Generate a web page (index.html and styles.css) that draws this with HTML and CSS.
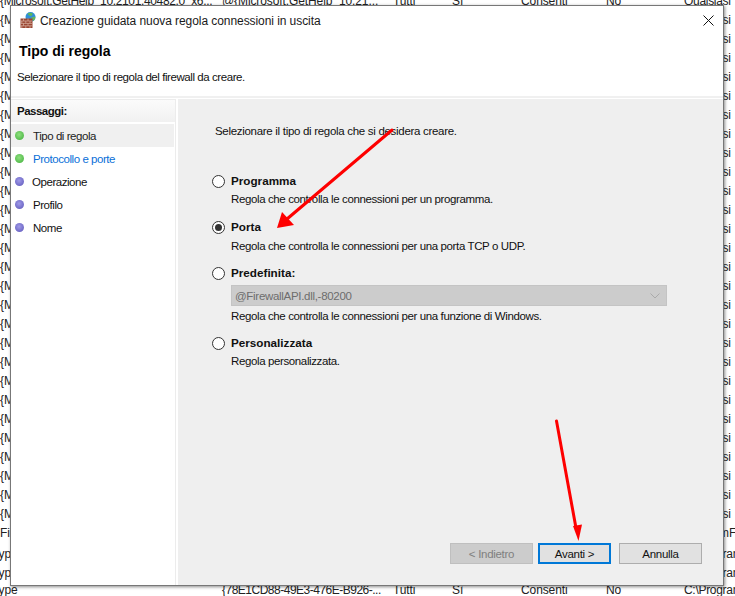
FILE: index.html
```html
<!DOCTYPE html>
<html lang="it">
<head>
<meta charset="utf-8">
<title>Creazione guidata nuova regola connessioni in uscita</title>
<link rel="stylesheet" href="styles.css">
</head>
<body>
<div class="backdrop">
  <div class="bg-row first"><span class="c1">{Microsoft.GetHelp_10.2101.40482.0_x6...</span><span class="c2">@{Microsoft.GetHelp_10.21...</span><span class="c3">Tutti</span><span class="c4">Sì</span><span class="c5">Consenti</span><span class="c6">No</span><span class="c7">Qualsiasi</span></div>
  <div class="bg-row"><span class="c1">{M</span><span class="c7">Qualsiasi</span></div>
  <div class="bg-row"><span class="c1">{M</span><span class="c7">Qualsiasi</span></div>
  <div class="bg-row"><span class="c1">{M</span><span class="c7">Qualsiasi</span></div>
  <div class="bg-row"><span class="c1">{M</span><span class="c7">Qualsiasi</span></div>
  <div class="bg-row"><span class="c1">{M</span><span class="c7">Qualsiasi</span></div>
  <div class="bg-row"><span class="c1">{M</span><span class="c7">Qualsiasi</span></div>
  <div class="bg-row"><span class="c1">{M</span><span class="c7">Qualsiasi</span></div>
  <div class="bg-row"><span class="c1">{M</span><span class="c7">Qualsiasi</span></div>
  <div class="bg-row"><span class="c1">{M</span><span class="c7">Qualsiasi</span></div>
  <div class="bg-row"><span class="c1">{M</span><span class="c7">Qualsiasi</span></div>
  <div class="bg-row"><span class="c1">{M</span><span class="c7">Qualsiasi</span></div>
  <div class="bg-row"><span class="c1">{M</span><span class="c7">Qualsiasi</span></div>
  <div class="bg-row"><span class="c1">{M</span><span class="c7">Qualsiasi</span></div>
  <div class="bg-row"><span class="c1">{M</span><span class="c7">Qualsiasi</span></div>
  <div class="bg-row"><span class="c1">{M</span><span class="c7">Qualsiasi</span></div>
  <div class="bg-row"><span class="c1">{M</span><span class="c7">Qualsiasi</span></div>
  <div class="bg-row"><span class="c1">{M</span><span class="c7">Qualsiasi</span></div>
  <div class="bg-row"><span class="c1">{M</span><span class="c7">Qualsiasi</span></div>
  <div class="bg-row"><span class="c1">{M</span><span class="c7">Qualsiasi</span></div>
  <div class="bg-row"><span class="c1">{M</span><span class="c7">Qualsiasi</span></div>
  <div class="bg-row"><span class="c1">{M</span><span class="c7">Qualsiasi</span></div>
  <div class="bg-row"><span class="c1">{M</span><span class="c7">Qualsiasi</span></div>
  <div class="bg-row"><span class="c1">{M</span><span class="c7">Qualsiasi</span></div>
  <div class="bg-row"><span class="c1">{M</span><span class="c7">Qualsiasi</span></div>
  <div class="bg-row"><span class="c1">{M</span><span class="c7">Qualsiasi</span></div>
  <div class="bg-row"><span class="c1">{M</span><span class="c7">Qualsiasi</span></div>
  <div class="bg-row"><span class="c1">{M</span><span class="c7">Qualsiasi</span></div>
  <div class="bg-row"><span class="c1">Firewall</span><span class="c7b">%ProgramFiles%</span></div>
  <div class="bg-row gap"><span class="c1 cut">Type</span><span class="c7">C:\Program</span></div>
  <div class="bg-row"><span class="c1 cut">Type</span><span class="c7">C:\Program</span></div>
  <div class="bg-row last"><span class="c1 cut">Type</span><span class="c2">{78E1CD88-49E3-476E-B926-...</span><span class="c3">Tutti</span><span class="c4">Sì</span><span class="c5">Consenti</span><span class="c6">No</span><span class="c7">C:\Program</span></div>
</div>

<div class="window">
  <header class="titlebar">
    <svg class="app-icon" viewBox="0 0 16 16" width="16" height="16" aria-hidden="true">
      <circle cx="10.500" cy="5" r="5" fill="#2f8fd8"/>
      <path d="M7.500 1.800c1.700-1.300 4-1.300 5.300 0l-1.300 2.200-2.500-.4z" fill="#5cb85c"/>
      <path d="M11 5.500l4.300-1c.3 1.800-.6 3.500-2.100 4.500z" fill="#66b55e"/>
      <path d="M0.500 6.500h12v9.500h-12z" fill="#9a4632"/>
      <path d="M0.500 9h12M0.500 11.400h12M0.500 13.800h12M3.500 6.500v2.500M8 6.500v2.500M1.800 9v2.400M5.800 9v2.400M10 9v2.400M3.500 11.400v2.400M8 11.400v2.400M1.800 13.800v2.200M5.800 13.800v2.200M10 13.800v2.200" stroke="#d9b3a3" stroke-width=".7" fill="none"/>
    </svg>
    <span class="title-text">Creazione guidata nuova regola connessioni in uscita</span>
    <svg class="close" viewBox="0 0 11 11" width="11" height="11" aria-hidden="true"><path d="M.5.5l10 10M10.500.5l-10 10" stroke="#111" stroke-width="1" fill="none"/></svg>
  </header>
  <section class="intro">
    <h1>Tipo di regola</h1>
    <p>Selezionare il tipo di regola del firewall da creare.</p>
  </section>
  <div class="body">
    <aside class="steps">
      <div class="steps-head">Passaggi:</div>
      <ul class="step-list">
        <li class="step selected"><i class="dot green"></i>Tipo di regola</li>
        <li class="step current"><i class="dot green"></i>Protocollo e porte</li>
        <li class="step narrow"><i class="dot violet"></i>Operazione</li>
        <li class="step"><i class="dot violet"></i>Profilo</li>
        <li class="step"><i class="dot violet"></i>Nome</li>
      </ul>
    </aside>
    <main class="content">
      <p class="lead">Selezionare il tipo di regola che si desidera creare.</p>
      <div class="options">
        <div class="option o-prog">
          <div class="opt-label"><i class="radio"></i>Programma</div>
          <p class="opt-desc">Regola che controlla le connessioni per un programma.</p>
        </div>
        <div class="option o-port">
          <div class="opt-label"><i class="radio on"></i>Porta</div>
          <p class="opt-desc">Regola che controlla le connessioni per una porta TCP o UDP.</p>
        </div>
        <div class="option o-pre">
          <div class="opt-label"><i class="radio"></i>Predefinita:</div>
          <div class="select"><span>@FirewallAPI.dll,-80200</span>
            <svg viewBox="0 0 10 6" width="10" height="6" aria-hidden="true"><path d="M.5.5L5 5 9.500.5" stroke="#aaa" fill="none"/></svg>
          </div>
          <p class="opt-desc">Regola che controlla le connessioni per una funzione di Windows.</p>
        </div>
        <div class="option o-cust">
          <div class="opt-label"><i class="radio"></i>Personalizzata</div>
          <p class="opt-desc">Regola personalizzata.</p>
        </div>
      </div>
      <div class="buttons">
        <button class="btn back" disabled>&lt; Indietro</button>
        <button class="btn next">Avanti &gt;</button>
        <button class="btn cancel">Annulla</button>
      </div>
    </main>
  </div>
</div>

<svg class="arrows" viewBox="0 0 735 596" width="735" height="596" aria-hidden="true">
  <line x1="392" y1="130" x2="287" y2="219" stroke="#fe0000" stroke-width="3" stroke-linecap="round"/>
  <path d="M277 228L282 212 294 225z" fill="#fe0000"/>
  <line x1="556.500" y1="421" x2="576" y2="528" stroke="#fe0000" stroke-width="3" stroke-linecap="round"/>
  <path d="M578.500 541L573 526 582 524.500z" fill="#fe0000"/>
</svg>
</body>
</html>
```
FILE: styles.css
```css
* { box-sizing: border-box; }
html, body { margin: 0; padding: 0; }
body {
  position: relative;
  width: 735px;
  height: 596px;
  overflow: hidden;
  background: #fff;
  font: 11.500px/16px "Liberation Sans", Arial, sans-serif;
  letter-spacing: -.3px;
  color: #111;
}
.backdrop { height: 596px; overflow: hidden; }
.bg-row {
  position: relative;
  height: 19px;
  line-height: 19px;
  font-size: 12px;
  letter-spacing: -.1px;
  white-space: nowrap;
  color: #222;
}
.bg-row.first { margin-top: -8px; }
.bg-row.gap { margin-top: 2px; }
.bg-row.last { margin-top: -2px; }
.bg-row span { position: absolute; top: 0; }
.c1 { left: 0; }
.first .c1 { letter-spacing: -.35px; }
.c1.cut { left: -8px; }
.c2 { left: 222px; }
.last .c2 { letter-spacing: -.5px; }
.c3 { left: 393px; }
.c4 { left: 452px; }
.c5 { left: 521px; }
.c6 { left: 606px; }
.c7 { left: 684px; letter-spacing: -.3px; }
.c7b { left: 673px; }

.window {
  position: absolute;
  left: 10px;
  top: 5px;
  width: 714px;
  height: 581px;
  background: #fff;
  border: 1px solid #777;
  box-shadow: 1px 1px 3px rgba(0,0,0,.45);
  display: flex;
  flex-direction: column;
}
.titlebar {
  height: 30px;
  flex: none;
  display: flex;
  align-items: center;
  padding: 0 10px 1px 9px;
  gap: 4px;
}
.app-icon { flex: none; margin-top: -1px; }
.title-text { flex: 1; font-size: 12px; letter-spacing: -.07px; color: #1a1a1a; }
.close { flex: none; margin-right: -1px; }
.intro { height: 60px; flex: none; padding: 7px 0 0 6px; }
.intro h1 { margin: 0 0 0 2px; font-size: 14px; letter-spacing: 0; line-height: 17px; font-weight: 700; color: #000; }
.intro p { margin: 9px 0 0; line-height: 16px; letter-spacing: -.43px; }
.body {
  flex: 1;
  display: flex;
  border-top: 2px solid #f0f0f0;
  padding-top: 1px;
}
.steps {
  width: 165px;
  flex: none;
  margin-right: 2px;
  background: #fff;
  border-top: 1px solid #ececec;
  border-right: 1px solid #ececec;
}
.steps-head {
  height: 22px;
  padding: 3px 0 0 6px;
  font-weight: 700;
  letter-spacing: -.5px;
  background: linear-gradient(#fbfbfb, #f1f1f1);
  color: #111;
}
.step-list { list-style: none; margin: 2px 0 0; padding: 0; letter-spacing: -.45px; }
.step {
  height: 23px;
  display: flex;
  align-items: center;
  margin-right: 1px;
}
.step.selected { background: #f0f0f0; color: #222; }
.step.current { color: #0a6fd8; }
.dot { width: 9px; height: 9px; border-radius: 50%; margin: 0 9px 0 4px; flex: none; }
.step.narrow .dot { margin-right: 8px; }
.dot.green { background: radial-gradient(circle at 45% 40%, #8fe07f, #3fae3a); }
.dot.violet { background: radial-gradient(circle at 45% 40%, #a09ae8, #5a54b8); }
.content {
  flex: 1;
  position: relative;
  background: #efefef;
  padding: 24px 0 0 37px;
  display: flex;
  flex-direction: column;
}
.lead { margin: 0; line-height: 16px; }
.options { margin: 34px 0 0 -3px; }
.opt-label {
  display: flex;
  align-items: center;
  height: 16px;
  font-weight: 700;
  font-size: 11.700px;
  letter-spacing: 0;
  color: #111;
  gap: 6px;
}
.radio {
  width: 13px;
  height: 13px;
  border-radius: 50%;
  background: #fff;
  border: 1px solid #333;
  flex: none;
  position: relative;
}
.radio.on::after {
  content: "";
  position: absolute;
  left: 2px;
  top: 2px;
  width: 7px;
  height: 7px;
  border-radius: 50%;
  background: #333;
}
.opt-desc { margin: 2px 0 0 19px; line-height: 16px; letter-spacing: -.38px; }
.o-prog { height: 46px; }
.o-port { height: 46px; }
.o-port .opt-desc { margin-top: 3px; }
.o-pre { height: 70px; }
.select {
  margin: 4px 0 0 19px;
  width: 436px;
  height: 21px;
  background: #cccccc;
  border: 1px solid #c4c4c4;
  color: #6d6d6d;
  display: flex;
  align-items: center;
  justify-content: space-between;
  padding: 0 6px 0 3px;
}
.buttons {
  margin: auto 21px 21px 0;
  display: flex;
  justify-content: flex-end;
}
.btn {
  height: 21px;
  font: 11.500px/16px "Liberation Sans", Arial, sans-serif;
  letter-spacing: -.3px;
  color: #111;
  background: #e1e1e1;
  border: 1px solid #adadad;
  padding: 0;
}
.back { width: 83px; background: #cccccc; border-color: #bfbfbf; color: #7f7f7f; margin-right: 5px; }
.next { width: 73px; border: 2px solid #0078d7; margin-right: 8px; }
.cancel { width: 83px; }
.arrows { position: absolute; left: 0; top: 0; pointer-events: none; }
```
